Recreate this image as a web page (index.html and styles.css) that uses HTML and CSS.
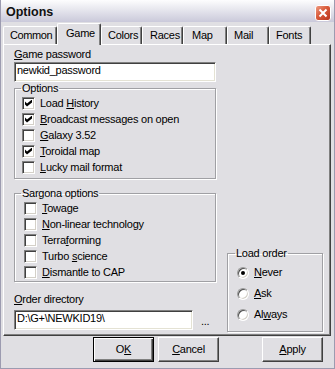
FILE: index.html
```html
<!DOCTYPE html>
<html lang="en">
<head>
    <meta charset="UTF-8">
    <title>Options</title>
    <link rel="stylesheet" href="styles.css">
</head>
<body>
    <div class="window">
        <div class="titlebar">
            <span class="title">Options</span>
            <span class="close">
                <svg width="16" height="16" viewBox="0 0 16 16">
                    <defs>
                        <linearGradient id="red" x1="0" y1="0" x2="1" y2="1">
                            <stop offset="0" stop-color="#f0a088"/>
                            <stop offset="0.45" stop-color="#d85a3a"/>
                            <stop offset="1" stop-color="#b8321a"/>
                        </linearGradient>
                    </defs>
                    <rect x="0.5" y="0.5" width="15" height="15" rx="2.5" fill="url(#red)" stroke="#fff"/>
                    <path d="M4.5 4.5 L11.5 11.5 M11.5 4.5 L4.5 11.5" stroke="#fff" stroke-width="2"/>
                </svg>
            </span>
        </div>

        <div class="tabs">
            <div class="tab tab-common">Common</div>
            <div class="tab tab-game active">Game</div>
            <div class="tab tab-colors">Colors</div>
            <div class="tab tab-races">Races</div>
            <div class="tab tab-map">Map</div>
            <div class="tab tab-mail">Mail</div>
            <div class="tab tab-fonts">Fonts</div>
        </div>

        <div class="panel">
            <div class="col-left">
                <div class="label"><u>G</u>ame password</div>
                <div class="textbox">newkid_password</div>

                <fieldset class="group group-options">
                    <legend>Options</legend>
                    <div class="check-row"><span class="checkbox checked"></span><span>Load <u>H</u>istory</span></div>
                    <div class="check-row"><span class="checkbox checked"></span><span><u>B</u>roadcast messages on open</span></div>
                    <div class="check-row"><span class="checkbox"></span><span><u>G</u>alaxy 3.52</span></div>
                    <div class="check-row"><span class="checkbox checked"></span><span><u>T</u>oroidal map</span></div>
                    <div class="check-row"><span class="checkbox"></span><span><u>L</u>ucky mail format</span></div>
                </fieldset>

                <fieldset class="group group-sargona">
                    <legend>Sargona options</legend>
                    <div class="check-row"><span class="checkbox"></span><span><u>T</u>owage</span></div>
                    <div class="check-row"><span class="checkbox"></span><span><u>N</u>on-linear technology</span></div>
                    <div class="check-row"><span class="checkbox"></span><span>Terra<u>f</u>orming</span></div>
                    <div class="check-row"><span class="checkbox"></span><span>Turbo <u>s</u>cience</span></div>
                    <div class="check-row"><span class="checkbox"></span><span><u>D</u>ismantle to CAP</span></div>
                </fieldset>

                <div class="label label-dir"><u>O</u>rder directory</div>
                <div class="dir-row">
                    <div class="textbox textbox-dir">D:\G+\NEWKID19\</div>
                    <span class="dots">...</span>
                </div>
            </div>

            <div class="col-right">
                <fieldset class="group group-load">
                    <legend>Load order</legend>
                    <div class="radio-row"><span class="radio selected"></span><span><u>N</u>ever</span></div>
                    <div class="radio-row"><span class="radio"></span><span><u>A</u>sk</span></div>
                    <div class="radio-row"><span class="radio"></span><span>Al<u>w</u>ays</span></div>
                </fieldset>
            </div>
        </div>

        <div class="buttons">
            <button class="btn btn-default">O<u>K</u></button>
            <button class="btn"><u>C</u>ancel</button>
            <button class="btn btn-apply"><u>A</u>pply</button>
        </div>
    </div>
</body>
</html>
```

FILE: styles.css
```css
* {
    box-sizing: border-box;
}
body {
    margin: 0;
    font-family: "Liberation Sans", Arial, sans-serif;
    font-size: 11px;
    line-height: 13px;
    letter-spacing: -0.25px;
    color: #000;
    background: #e0dfe3;
}
u {
    text-decoration-thickness: 1px;
    text-underline-offset: 1px;
}
.window {
    width: 335px;
    height: 369px;
    border: 1px solid #9c9bb0;
    border-top: none;
    background: #e0dfe3;
    display: flex;
    flex-direction: column;
}
.titlebar {
    height: 22px;
    display: flex;
    align-items: center;
    justify-content: space-between;
    padding: 0 3px 0 5px;
    background: linear-gradient(#fdfdfe, #ebebf1 35%, #cac9da);
}
.title {
    font-weight: bold;
    font-size: 12.5px;
    letter-spacing: 0;
    padding-top: 3px;
    color: #111;
}
.close {
    display: flex;
    margin-top: 4px;
}
/* Tabs */
.tabs {
    display: flex;
    align-items: flex-end;
    height: 22px;
    padding-left: 2px;
}
.tab {
    height: 18px;
    border-top: 1px solid #fff;
    border-left: 1px solid #fff;
    border-right: 1px solid #404040;
    box-shadow: inset -1px 0 #808080;
    border-radius: 2px 2px 0 0;
    padding: 2px 0 0 7px;
    white-space: nowrap;
    overflow: hidden;
}
.tab.active {
    height: 22px;
    margin-bottom: -1px;
    position: relative;
    z-index: 1;
    background: #e0dfe3;
    padding-top: 3px;
}
.tab-common { width: 54px; padding-left: 6px; letter-spacing: -0.4px; }
.tab-game { width: 44px; padding-left: 8px; }
.tab-colors { width: 41px; padding-left: 6px; }
.tab-races { width: 41px; }
.tab-map { width: 44px; padding-left: 8px; }
.tab-mail { width: 42px; padding-left: 6px; }
.tab-fonts { width: 42px; padding-left: 6px; }
/* Panel */
.panel {
    margin-left: 2px;
    width: 328px;
    height: 292px;
    border: 1px solid;
    border-color: #fff #404040 #404040 #fff;
    box-shadow: inset -1px -1px #808080;
    display: flex;
    gap: 11px;
    padding: 3px 0 3px 10px;
}
.col-left {
    width: 202px;
    display: flex;
    flex-direction: column;
}
.col-right {
    width: 96px;
    display: flex;
    flex-direction: column;
    justify-content: flex-end;
}
.label {
    height: 13px;
}
.label-dir {
    margin-top: 11px;
}
.textbox {
    height: 20px;
    margin-top: 1px;
    background: #fff;
    border: 1px solid;
    border-color: #808080 #fff #fff #808080;
    box-shadow: inset 1px 1px #404040, inset -1px -1px #e4e2d4;
    padding: 1px 0 0 2px;
    line-height: 12px;
    white-space: nowrap;
}
.dir-row {
    display: flex;
    align-items: flex-end;
    margin-top: 3px;
}
.textbox-dir {
    width: 179px;
}
.dots {
    margin-left: 8px;
    padding-bottom: 2px;
}
/* Group boxes */
.group {
    margin: 0;
    min-width: 0;
    border: 1px solid #a0a0a4;
    box-shadow: 1px 1px 0 #fff, inset 1px 1px 0 #fff;
    padding: 0 0 3px 7px;
}
.group legend {
    padding: 0 1px;
    margin-left: -1px;
    line-height: 13px;
}
.group-sargona {
    margin-top: 8px;
    padding: 0 0 1px 9px;
}
.group-sargona legend {
    margin-left: -3px;
}
.group-load {
    padding: 2px 0 6px 9px;
}
.group-load legend {
    margin-left: -2px;
}
.check-row {
    display: flex;
    align-items: center;
    height: 16px;
    gap: 5px;
    white-space: nowrap;
}
.checkbox {
    width: 13px;
    height: 13px;
    flex: none;
    background: #fff;
    border: 1px solid;
    border-color: #808080 #fff #fff #808080;
    box-shadow: inset 1px 1px #404040, inset -1px -1px #d4d0c8;
    position: relative;
}
.checkbox.checked::after {
    content: "";
    position: absolute;
    left: 2px;
    top: 2px;
    width: 7px;
    height: 7px;
    background: #000;
    clip-path: polygon(0 28.6%, 28.6% 57%, 100% 0, 100% 43%, 28.6% 100%, 0 71.4%);
}
.radio-row {
    display: flex;
    align-items: center;
    height: 21px;
    gap: 5px;
}
.radio {
    width: 12px;
    height: 12px;
    flex: none;
    border-radius: 50%;
    background: #fff;
    border: 1px solid;
    border-color: #9a9a9a #fff #fff #9a9a9a;
    box-shadow: inset 1px 1px #505050, inset -1px -1px #d4d0c8;
    position: relative;
}
.radio.selected::after {
    content: "";
    position: absolute;
    left: 3px;
    top: 3px;
    width: 4px;
    height: 4px;
    border-radius: 50%;
    background: #000;
}
/* Buttons */
.buttons {
    display: flex;
    gap: 4px;
    margin-top: 1px;
    padding-left: 92px;
}
.btn {
    width: 61px;
    height: 25px;
    padding: 0;
    font: inherit;
    letter-spacing: inherit;
    color: #000;
    background: #e0dfe3;
    border: 1px solid;
    border-color: #fff #404040 #404040 #fff;
    box-shadow: inset -1px -1px #808080;
}
.btn-default {
    border-color: #000;
    box-shadow: inset 1px 1px #fff, inset -1px -1px #404040, inset -2px -2px #808080;
}
.btn-apply {
    margin-left: 39px;
}
```
